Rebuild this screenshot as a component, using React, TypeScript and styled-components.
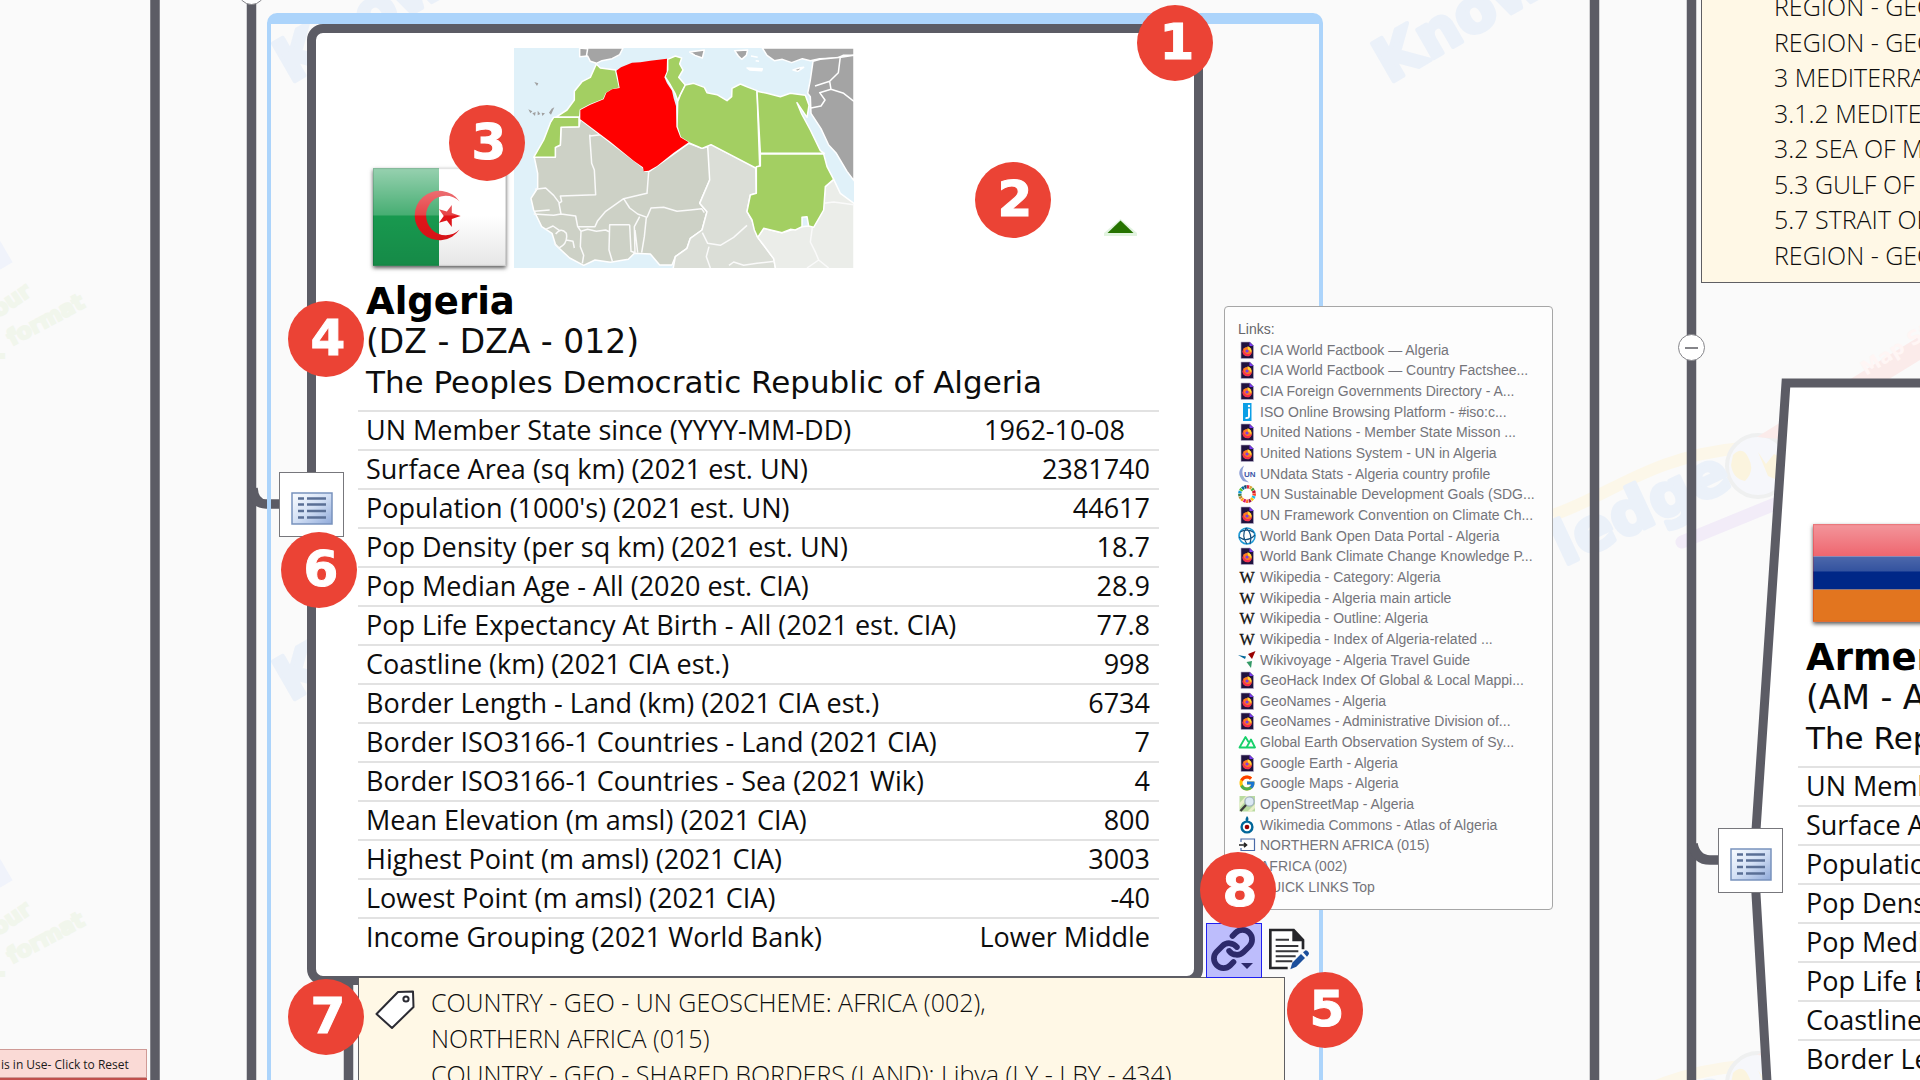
import React from 'react';
import styled, { createGlobalStyle } from 'styled-components';
import { Link as ChainIcon } from 'lucide-react';
import { FcGoogle } from 'react-icons/fc';

const color = {
  paper: '#fafafa',
  line: '#5c5c65',
  frame: '#acd4fb',
  note: '#fff8e6',
  noteEdge: '#5f5f63',
  badge: '#eb4335',
  rule: '#e2e2e2',
};

const GlobalStyle = createGlobalStyle`
  *, *::before, *::after { box-sizing: border-box; }
  body { margin: 0; background: ${color.paper}; font-family: "Open Sans", "Noto Sans", sans-serif; color: #0d0d0d; }
  ul { list-style: none; margin: 0; padding: 0; }
  h2, p { margin: 0; }
  svg { display: block; }
`;

const Canvas = styled.main`
  position: relative;
  width: 100%;
  height: 100vh;
  overflow: hidden;
  background: ${color.paper};
`;

const Backdrop = styled.svg`
  position: absolute;
  inset: 0;
`;

const Frame = styled.div`
  position: absolute;
  left: 267px;
  top: 13px;
  bottom: -20px;
  width: 1056px;
  border: 4px solid ${color.frame};
  border-top-width: 11px;
  border-radius: 10px;
`;

/* Country nodes */

const CountryCard = styled.article`
  position: absolute;
  left: 307px;
  top: 24px;
  width: 896px;
  padding: 15px 35px 20px 42px;
  border: 9px solid ${color.line};
  border-radius: 16px;
  background: #fff;
`;

const OutlineCard = styled.article`
  position: absolute;
  left: 1798px;
  top: 404px;
  width: 801px;
`;

const Media = styled.div`
  display: flex;
  align-items: flex-end;
  gap: 8px;
  height: 220px;
  padding: 0 22px 0 15px;
`;

const FlagBox = styled.div`
  margin-bottom: 2px;
  box-shadow: 0 2px 4px rgba(0, 0, 0, 0.65);
`;

const TrendBox = styled.div`
  margin: 0 0 32px auto;
`;

const Titles = styled.header`
  padding: 14px 8px 8px;
  font-family: "DejaVu Sans", Verdana, sans-serif;
  line-height: 40px;
  white-space: nowrap;
`;

const Name = styled.h2`
  font-size: 37px;
  font-weight: 700;
  color: #000;
`;

const Codes = styled.p`
  font-size: 33px;
`;

const FullName = styled.p`
  font-size: 31px;
`;

const Facts = styled.table`
  width: 100%;
  border-collapse: separate;
  border-spacing: 0;
  font-size: 27px;
  line-height: 35px;
  white-space: nowrap;
`;

const FactLabel = styled.th`
  padding: 0 8px 2px;
  border-top: 2px solid ${color.rule};
  font-weight: 400;
  text-align: left;
`;

const FactValue = styled.td<{ $inset?: boolean }>`
  padding: 0 ${(p) => (p.$inset ? 34 : 9)}px 2px 0;
  border-top: 2px solid ${color.rule};
  text-align: right;
`;

const NodeButton = styled.button<{ $x: number; $y: number }>`
  position: absolute;
  left: ${(p) => p.$x}px;
  top: ${(p) => p.$y}px;
  display: flex;
  align-items: center;
  justify-content: center;
  width: 65px;
  height: 65px;
  padding: 8px 0 0;
  border: 1px solid #77777c;
  background: #fff;
`;

const CollapseButton = styled.button<{ $y: number; $x: number }>`
  position: absolute;
  left: ${(p) => p.$x}px;
  top: ${(p) => p.$y}px;
  display: flex;
  align-items: center;
  justify-content: center;
  width: 27px;
  height: 27px;
  padding: 0;
  border: 1px solid #85858a;
  border-radius: 50%;
  background: #fff;
`;

const Minus = styled.span`
  width: 13px;
  height: 2px;
  background: #85858a;
`;

/* Tag notes */

const TagNote = styled.section`
  position: absolute;
  left: 358px;
  top: 977px;
  display: flex;
  gap: 16px;
  width: 927px;
  padding: 6px 16px;
  border: 1px solid ${color.noteEdge};
  background: ${color.note};
  font-size: 25px;
  font-weight: 350;
  line-height: 36px;
  white-space: nowrap;
`;

const TagGlyph = styled.div`
  padding-top: 6px;
`;

const SideNote = styled.section`
  position: absolute;
  left: 1701px;
  top: -21px;
  width: 926px;
  padding: 9px 72px;
  border: 1px solid ${color.noteEdge};
  background: ${color.note};
  font-size: 25px;
  font-weight: 350;
  line-height: 35px;
  white-space: nowrap;
`;

const SideList = styled.ul`
  display: flex;
  flex-direction: column;
  justify-content: space-between;
  height: 284px;
`;

/* Link menu */

const LinkMenu = styled.nav`
  position: absolute;
  left: 1224px;
  top: 306px;
  width: 329px;
  height: 604px;
  display: flex;
  flex-direction: column;
  justify-content: space-between;
  padding: 12px 12px 12px 13px;
  border: 1px solid #a6a6a6;
  border-radius: 4px;
  background: #fdfdfd;
  font: 14px/20px "Liberation Sans", Arial, sans-serif;
  color: #66666a;
  white-space: nowrap;
`;

const MenuLink = styled.a`
  display: flex;
  align-items: center;
  gap: 4px;
  color: #74747a;
  text-decoration: none;
`;

const Tools = styled.div`
  position: absolute;
  left: 1206px;
  top: 923px;
  display: flex;
  align-items: flex-start;
  gap: 6px;
`;

const LinkTool = styled.button`
  position: relative;
  display: flex;
  align-items: center;
  justify-content: center;
  width: 56px;
  height: 55px;
  padding: 0 2px 4px 0;
  border: 1px solid #1f1ff0;
  background: #bdbdfc;
  color: #2d2a6b;
`;

const Caret = styled.span`
  position: absolute;
  right: 8px;
  bottom: 8px;
  border: 6px solid transparent;
  border-top-color: currentColor;
  border-bottom: 0;
`;

const NoteTool = styled.button`
  padding: 5px 0 0;
  border: 0;
  background: none;
`;

const Badge = styled.span<{ $x: number; $y: number }>`
  position: absolute;
  left: ${(p) => p.$x - 38}px;
  top: ${(p) => p.$y - 38}px;
  width: 76px;
  height: 76px;
  padding-left: 4px;
  border-radius: 50%;
  background: ${color.badge};
  color: #fff;
  font: 700 50px/74px "DejaVu Sans", Verdana, sans-serif;
  -webkit-text-stroke: 1px #fff;
  text-align: center;
`;

const ResetBar = styled.div`
  position: absolute;
  left: 0;
  top: 1049px;
  width: 147px;
  border-bottom: 1px solid #b06060;
  background: #c0504d;
`;

const ResetButton = styled.button`
  display: block;
  width: 100%;
  height: 29px;
  margin-bottom: 2px;
  padding: 2px 0 0 1px;
  border: 1px solid #cf9a96;
  border-left: 0;
  background: #fadad6;
  color: #1a1a1a;
  font: 12px/24px "Open Sans", sans-serif;
  text-align: left;
`;

/* Drawings */

const Watermark = () => (
  <g fontFamily="DejaVu Sans" fontWeight="700">
    {[0, 618].map((dy) => (
      <g key={dy} transform={`translate(0 ${dy})`}>
        <path d="M1553 515C1610 496 1650 456 1742 448" stroke="#fcf7e9" strokeWidth="12" fill="none" />
        <path d="M1682 542L1775 504" stroke="#f2ecf8" strokeWidth="13" strokeLinecap="round" />
        <circle cx="1758" cy="466" r="31" fill="#f6f7fb" stroke="#eff0f0" strokeWidth="4" />
        <path d="M1733 455q10-10 16 4q6 12-4 22q-12-2-14-16zM1758 452l8 12l8-10l8 4v24l-14-6z" fill="#fbf4de" />
        <path d="M1757 437L1920 336V360L1790 440z" fill="#fbebea" />
        <text transform="translate(1866 376) rotate(-32)" fontSize="20" fill="#fff6f5">Map St</text>
        <g fill="#ebf1f9" stroke="#ebf1f9" strokeWidth="4" strokeLinejoin="round" fontSize="60">
          <text transform="translate(290 84) rotate(-30)">Know</text>
          <text transform="translate(1389 84) rotate(-30)">Know</text>
          <text transform="translate(1564 566) rotate(-25)">ledge</text>
          <text transform="translate(468 566) rotate(-25)">ledge</text>
        </g>
        <text transform="translate(-22 280) rotate(-30)" fontSize="58" fill="#f0f3fb" stroke="#f0f3fb" strokeWidth="4">n</text>
        <g fill="#f1f6ec" stroke="#f1f6ec" strokeWidth="2" fontSize="22">
          <text transform="translate(-14 326) rotate(-34)">your</text>
          <text transform="translate(12 346) rotate(-28)">format</text>
          <text x="-2" y="358">.</text>
        </g>
      </g>
    ))}
  </g>
);

const Scenery = () => (
  <Backdrop width="1920" height="1700" viewBox="0 0 1920 1700" aria-hidden="true">
    <Watermark />
    <g stroke={color.line} strokeWidth="9.5" fill="none">
      <path d="M155 0V1700M251.500 0V1700M1594.500 0V1700M1691.500 0V1700M348.500 980V1700" />
      <path d="M253 488Q254 504 266 504H282" />
      <path d="M1693 844Q1696 860 1710 860H1720" />
    </g>
    <path d="M1786 383H2500V1337H1782L1754 860Z" fill="#fff" stroke={color.line} strokeWidth="9" />
  </Backdrop>
);

const RegionMap = () => (
  <svg width="340" height="220" viewBox="41 54 1020 660" role="img" aria-label="Algeria in Northern Africa">
    <rect x="41" y="54" width="1020" height="660" fill="#e0f1f9" />
    <g stroke="#fff" strokeWidth="4.500" strokeLinejoin="round">
      <g fill="#a4a4a4">
        <path d="M238 54H368L358 74L335 86L305 92L288 100L270 94L262 78L238 80Z" />
        <path d="M568 66L612 60L606 84L584 76ZM703 62L742 60L738 76L724 88L714 78Z" />
        <path d="M786 54H1061V76L1028 76L1012 84L958 86L930 92L906 86L874 98L846 88L822 92L800 76Z" />
        <path d="M938 94L960 88L1022 82L1061 76V452L1040 424L1008 370L985 345L962 296L932 250L930 200L922 190L930 150Z" />
        <path d="M1020 80L1014 128L988 154L944 168M988 154L992 178L1030 190L1061 214M992 178L958 188L974 210L962 228L932 234M236 54L262 56L258 80" fill="none" />
        <path d="M878 120L896 114L910 112L892 124Z" />
      </g>
      <path d="M740 114L786 116L784 122L748 120ZM752 78L772 82M766 92L776 94" fill="#fff" />
      <path d="M182 292L236 290L240 268L428 412L434 424H447L565 340L605 355L622 350L632 380L628 450L598 520L620 545L605 600L570 625L560 655L525 680L515 705L478 705L450 672L402 670L384 688L330 697L284 690L250 706L208 684L166 645L155 610L124 590L100 540L92 505L112 474V430L102 382L165 382V352L180 345Z" fill="#cdd1c6" />
      <path d="M622 348L632 344L766 412L768 490L750 495L740 545L755 570L772 622L820 686L826 718H518L525 680L560 655L570 625L605 600L620 545L598 520L628 450Z" fill="#dbded7" />
      <path d="M772 622L790 595L845 608L905 590L925 588L970 520L975 470L1000 448L1020 490L1061 520V718H826L820 686Z" fill="#ebede9" />
      <path d="M268 318L302 314M268 314L274 400L282 420L286 494L180 498L184 514L176 520L182 552L226 558L232 590H284L292 572L316 544L370 506L414 496L440 490L445 426M370 506L388 534L412 552L440 562M440 562L452 534L490 532L530 544L570 540L604 536L612 548M438 562L432 620L424 668M388 584L392 664L404 668L402 590L418 560M388 584H328L326 660L336 694M404 600L412 668M242 604L262 598L288 604L316 600L328 606M246 700L250 676L240 650L242 604L232 590M104 478L136 474L160 496L178 520M102 544L148 540M100 552L160 556L182 552M136 598L158 588L178 602M166 612Q182 590 198 610Q204 640 176 654L162 640M198 630L218 634L222 654M606 608L622 640L660 646L700 622L740 586M626 650L618 680L630 714M686 706L700 696L730 706L770 700L824 694M936 592L930 636L946 668L955 690M970 520L1000 516L1061 524M955 690L920 714M955 690L985 714" fill="none" stroke="#fafafa" />
      <g fill="#a3cf62">
        <path d="M288 102L300 114L346 120L358 174L335 180L318 190L310 208L270 224L240 240L238 262H166L200 240L222 210L222 184L245 155L270 142Z" />
        <path d="M160 262H236V290L182 292L180 345L165 352V382H100L130 330L150 278Z" />
        <path d="M502 88L525 78L544 84L538 102L548 120L535 142L555 165L542 190L532 212L524 190L510 165L494 140L502 120Z" />
        <path d="M555 165L580 160L612 172L620 188L650 194L680 212L694 200L695 175L720 162L744 172L770 182L778 408L766 414L632 344L605 355L565 338L540 322L530 290L532 215L540 195Z" />
        <path d="M770 184L800 190L840 200L870 190L915 196L926 226L920 262L890 218L904 252L930 300L960 362L972 370H780Z" />
        <path d="M780 372H970L980 410L1000 448L975 470L970 540L940 592L925 588L920 560L905 562V590L885 600L870 598L845 608L790 595L772 622L762 600L755 570L740 545L750 495L768 490V410L780 408Z" />
      </g>
    </g>
    <path d="M348 122L362 112L395 98L420 97L450 92L500 86L499 125L492 142L500 160L515 182L520 205L527 228L528 290L540 322L565 337L520 368L470 408L445 422L430 424L428 412L400 392L330 335L240 268V240L270 224L310 208L318 188L335 178L358 174L352 140Z" fill="#f00" />
    <path d="M102 156L114 160L110 168ZM84 238L96 244L90 250ZM96 250L106 246L104 258ZM112 242L120 252L112 256ZM124 248L134 250L126 258ZM146 248L154 236L162 232L152 254Z" fill="#a0a0a0" />
  </svg>
);

const AlgeriaFlag = () => (
  <svg width="133" height="98" viewBox="0 0 132 97" role="img" aria-label="Flag of Algeria">
    <defs>
      <linearGradient id="shine" x1="0" y1="0" x2="0" y2="1">
        <stop offset="0" stopColor="#fff" stopOpacity=".55" />
        <stop offset="1" stopColor="#fff" stopOpacity=".2" />
      </linearGradient>
      <linearGradient id="shade" x1="0" y1="0" x2="0" y2="1">
        <stop offset="0" stopColor="#000" stopOpacity="0" />
        <stop offset="1" stopColor="#000" stopOpacity=".1" />
      </linearGradient>
    </defs>
    <rect width="132" height="97" fill="#fff" />
    <rect width="65.500" height="97" fill="#18994f" />
    <path d="M86 33A24.500 24.500 0 1 0 86 61A19.600 19.600 0 1 1 86 33Z" fill="#e01419" />
    <path d="M87 47.500L78.200 50.400L78.200 58.500L73.300 51.900L65.500 54.200L70.200 47.500L65.500 40.800L73.300 43.100L78.200 36.500L78.200 44.600Z" fill="#e01419" />
    <rect width="132" height="47" fill="url(#shine)" />
    <rect y="47" width="132" height="50" fill="url(#shade)" />
    <rect x=".5" y=".5" width="131" height="96" fill="none" stroke="#000" strokeOpacity=".12" />
  </svg>
);

const ArmeniaFlag = () => (
  <svg width="133" height="98" viewBox="0 0 132 97" role="img" aria-label="Flag of Armenia">
    <defs>
      <linearGradient id="gloss" x1="0" y1="0" x2="0" y2="1">
        <stop offset="0" stopColor="#fff" stopOpacity=".52" />
        <stop offset="1" stopColor="#fff" stopOpacity=".2" />
      </linearGradient>
    </defs>
    <rect width="132" height="32" fill="#e72430" />
    <rect y="32" width="132" height="33" fill="#002787" />
    <rect y="65" width="132" height="32" fill="#e2751f" />
    <rect width="132" height="47" fill="url(#gloss)" />
    <rect x=".5" y=".5" width="131" height="96" fill="none" stroke="#d01010" strokeOpacity=".25" />
  </svg>
);

const TrendUp = () => (
  <svg width="33" height="17" viewBox="0 0 33 17" role="img" aria-label="Up">
    <path d="M16.500 0L33 14V17H0V14Z" fill="#e2f4e0" />
    <path d="M16.500 1.500L29.500 14H3.500Z" fill="#267300" />
  </svg>
);

const ListIcon = () => (
  <svg width="42" height="33" viewBox="0 0 42 33" aria-hidden="true">
    <defs>
      <linearGradient id="panel" x1="0" y1="0" x2="1" y2="1">
        <stop offset="0" stopColor="#fbfdff" />
        <stop offset=".5" stopColor="#d3e0f5" />
        <stop offset="1" stopColor="#8fa9d9" />
      </linearGradient>
    </defs>
    <rect x="1" y="1" width="40" height="31" fill="url(#panel)" stroke="#7892bd" strokeWidth="1.500" />
    <path d="M7 6.500H13M7 12.500H13M7 19H13M7 25.500H13M16 6.500H35M16 12.500H35M16 19H35M16 25.500H35" stroke="#5a6f95" strokeWidth="2.600" />
  </svg>
);

const TagIcon = () => (
  <svg width="40" height="40" viewBox="0 0 40 40" aria-hidden="true">
    <path d="M23 2L38 1.500L38.500 17L17 38L1.500 24Z" fill="#fff" stroke="#2b2b33" strokeWidth="2" strokeLinejoin="round" />
    <circle cx="31" cy="9" r="2.600" fill="#fff" stroke="#2b2b33" strokeWidth="2" />
  </svg>
);

const EditNoteIcon = () => (
  <svg width="42" height="42" viewBox="217 40 126 126" aria-hidden="true">
    <path d="M276 160H224V46H294L322 76V104" fill="#fff" stroke="#26262a" strokeWidth="8" />
    <path d="M290 44V80H326Z" fill="#26262a" />
    <path d="M240 75H280M240 94H308M240 110H308M240 125H300M240 140H290" stroke="#37373b" strokeWidth="6" />
    <path d="M284 164L290 144L316 118L328 130L302 156Z" fill="#1c4f9c" />
    <path d="M322 113L330 107Q340 110 340 118L334 126Z" fill="#1c4f9c" />
  </svg>
);

type Mark = 'fox' | 'iso' | 'un' | 'sdg' | 'bank' | 'wiki' | 'voyage' | 'geo' | 'google' | 'osm' | 'commons' | 'topic';

const wheel = ['#e5243b', '#dda63a', '#4c9f38', '#c5192d', '#ff3a21', '#26bde2', '#fcc30b', '#a21942', '#fd6925', '#dd1367', '#fd9d24', '#bf8b2e', '#3f7e44', '#0a97d9', '#56c02b', '#00689d', '#19486a'];

const drawings: Record<Mark, React.ReactNode> = {
  fox: (
    <>
      <path d="M3 1H12L15.500 4.500V17.500H3Z" fill="#20123f" stroke="#b9b3cf" strokeWidth=".6" />
      <path d="M11.500 1L15.500 5H11.500Z" fill="#7a3cf0" />
      <circle cx="9.200" cy="10.500" r="4.600" fill="#ff7a1f" />
      <path d="M4.600 10.500A4.600 4.600 0 0 0 13.800 11Q11 14 8 12.500Q5.500 11 5.500 8Z" fill="#f5304f" />
      <path d="M9.500 5Q14.500 7 13.200 11.500Q12 9 10 8.500Z" fill="#ffd83a" />
      <circle cx="9" cy="10" r="1.600" fill="#7b3fe0" />
    </>
  ),
  iso: (
    <>
      <path d="M5 0H13.500V18H5Z" fill="#0c9fe6" />
      <path d="M11 5.500V13Q11 15.500 7.500 15" stroke="#fff" strokeWidth="2" fill="none" />
      <circle cx="11" cy="3" r="1.200" fill="#fff" />
    </>
  ),
  un: (
    <>
      <path d="M6 .5Q-3 7 5 16L11 17.500Q1 11 6 .5Z" fill="#8fa0d6" />
      <text x="6" y="12" fontSize="8" fontWeight="700" fontFamily="Liberation Sans" fill="#3c56a8">UN</text>
    </>
  ),
  sdg: (
    <g fill="none" strokeWidth="3.400">
      {wheel.map((c, i) => (
        <circle key={c} cx="9" cy="9" r="7.200" stroke={c} pathLength="17" strokeDasharray=".84 16.16" strokeDashoffset={-i} transform="rotate(-90 9 9)" />
      ))}
    </g>
  ),
  bank: (
    <g fill="none">
      <circle cx="9" cy="9" r="8" stroke="#1d9ad6" strokeWidth="1.600" />
      <path d="M1 10Q9 16 17 8M2 5Q9 1 16 5.500M8 1Q3 9 9 17M8 1Q15 7 12 17" stroke="#14507f" strokeWidth="1.200" />
    </g>
  ),
  wiki: <text x="9" y="14.500" fontSize="16" textAnchor="middle" fontFamily="Liberation Serif" fill="#111" stroke="#111" strokeWidth=".3">W</text>,
  voyage: (
    <>
      <path d="M0 4L8 5.500L7 8Z" fill="#006699" />
      <path d="M17.500 0L14 8L10 3Z" fill="#990000" />
      <path d="M8.500 11L14 10L13 17Z" fill="#339966" />
    </>
  ),
  geo: <path d="M9.500 14.500H1.500L7.500 4L10.500 9M8.500 14.500L13 6.500L17 14.500Z" fill="none" stroke="#16d06a" strokeWidth="1.800" strokeLinejoin="round" />,
  google: null,
  osm: (
    <>
      <path d="M1.500 1H17V16.500H1.500Z" fill="#b9dba0" />
      <path d="M1.500 8L8 1H12L1.500 13ZM9 17L17 9V13L13 17Z" fill="#e7efc9" />
      <circle cx="11.500" cy="6.500" r="4.600" fill="#dbe8f4" stroke="#a4b5c0" strokeWidth="1.400" />
      <path d="M8 10L2.500 16" stroke="#3b3b3b" strokeWidth="2.400" />
    </>
  ),
  commons: (
    <>
      <circle cx="9" cy="11" r="5.400" fill="none" stroke="#006699" strokeWidth="2.400" />
      <circle cx="9" cy="11" r="2.300" fill="#990000" />
      <path d="M9 0Q12 3 9 6Q6 4 9 0Z" fill="#006699" />
    </>
  ),
  topic: (
    <>
      <path d="M3 6V3H16.500V14.500H3V12" fill="none" stroke="#4a6aa8" strokeWidth="1.200" />
      <path d="M1 9H8M6 6.800L8.500 9L6 11.200" fill="none" stroke="#222" strokeWidth="1.600" />
    </>
  ),
};

const Icon = ({ mark }: { mark: Mark }) =>
  mark === 'google' ? (
    <FcGoogle size={18} aria-hidden="true" />
  ) : (
    <svg width="18" height="18" viewBox="0 0 18 18" aria-hidden="true">{drawings[mark]}</svg>
  );

/* Data */

const links: [Mark, string][] = [
  ['fox', 'CIA World Factbook — Algeria'],
  ['fox', 'CIA World Factbook — Country Factshee...'],
  ['fox', 'CIA Foreign Governments Directory - A...'],
  ['iso', 'ISO Online Browsing Platform - #iso:c...'],
  ['fox', 'United Nations - Member State Misson ...'],
  ['fox', 'United Nations System - UN in Algeria'],
  ['un', 'UNdata Stats - Algeria country profile'],
  ['sdg', 'UN Sustainable Development Goals (SDG...'],
  ['fox', 'UN Framework Convention on Climate Ch...'],
  ['bank', 'World Bank Open Data Portal - Algeria'],
  ['fox', 'World Bank Climate Change Knowledge P...'],
  ['wiki', 'Wikipedia - Category: Algeria'],
  ['wiki', 'Wikipedia - Algeria main article'],
  ['wiki', 'Wikipedia - Outline: Algeria'],
  ['wiki', 'Wikipedia - Index of Algeria-related ...'],
  ['voyage', 'Wikivoyage - Algeria Travel Guide'],
  ['fox', 'GeoHack Index Of Global & Local Mappi...'],
  ['fox', 'GeoNames - Algeria'],
  ['fox', 'GeoNames - Administrative Division of...'],
  ['geo', 'Global Earth Observation System of Sy...'],
  ['fox', 'Google Earth - Algeria'],
  ['google', 'Google Maps - Algeria'],
  ['osm', 'OpenStreetMap - Algeria'],
  ['commons', 'Wikimedia Commons - Atlas of Algeria'],
  ['topic', 'NORTHERN AFRICA (015)'],
  ['topic', 'AFRICA (002)'],
  ['topic', 'QUICK LINKS Top'],
];

const facts: [string, string][] = [
  ['UN Member State since (YYYY-MM-DD)', '1962-10-08'],
  ['Surface Area (sq km) (2021 est. UN)', '2381740'],
  ["Population (1000's) (2021 est. UN)", '44617'],
  ['Pop Density (per sq km) (2021 est. UN)', '18.7'],
  ['Pop Median Age - All (2020 est. CIA)', '28.9'],
  ['Pop Life Expectancy At Birth - All (2021 est. CIA)', '77.8'],
  ['Coastline (km) (2021 CIA est.)', '998'],
  ['Border Length - Land (km) (2021 CIA est.)', '6734'],
  ['Border ISO3166-1 Countries - Land (2021 CIA)', '7'],
  ['Border ISO3166-1 Countries - Sea (2021 Wik)', '4'],
  ['Mean Elevation (m amsl) (2021 CIA)', '800'],
  ['Highest Point (m amsl) (2021 CIA)', '3003'],
  ['Lowest Point (m amsl) (2021 CIA)', '-40'],
  ['Income Grouping (2021 World Bank)', 'Lower Middle'],
];

const regions = [
  'REGION - GEO',
  'REGION - GEO',
  '3 MEDITERRANEAN',
  '3.1.2 MEDITERRANEAN',
  '3.2 SEA OF MARMARA',
  '5.3 GULF OF ADEN',
  '5.7 STRAIT OF',
  'REGION - GEO',
];

const badges = [
  [1, 1175, 43], [2, 1013, 200], [3, 487, 143], [4, 326, 339],
  [5, 1325, 1010], [6, 319, 570], [7, 326, 1017], [8, 1238, 890],
];

export default function App() {
  return (
    <Canvas>
      <GlobalStyle />
      <Scenery />
      <Frame />

      <CountryCard>
        <Media>
          <FlagBox><AlgeriaFlag /></FlagBox>
          <RegionMap />
          <TrendBox><TrendUp /></TrendBox>
        </Media>
        <Titles>
          <Name>Algeria</Name>
          <Codes>(DZ - DZA - 012)</Codes>
          <FullName>The Peoples Democratic Republic of Algeria</FullName>
        </Titles>
        <Facts>
          <tbody>
            {facts.map(([label, value], i) => (
              <tr key={label}>
                <FactLabel scope="row">{label}</FactLabel>
                <FactValue $inset={i === 0}>{value}</FactValue>
              </tr>
            ))}
          </tbody>
        </Facts>
      </CountryCard>

      <OutlineCard>
        <Media>
          <FlagBox><ArmeniaFlag /></FlagBox>
        </Media>
        <Titles>
          <Name>Armenia</Name>
          <Codes>(AM - ARM - 051)</Codes>
          <FullName>The Republic of Armenia</FullName>
        </Titles>
        <Facts>
          <tbody>
            {facts.slice(0, 8).map(([label]) => (
              <tr key={label}>
                <FactLabel scope="row">{label}</FactLabel>
              </tr>
            ))}
          </tbody>
        </Facts>
      </OutlineCard>

      <SideNote>
        <SideList>
          {regions.map((r, i) => <li key={i}>{r}</li>)}
        </SideList>
      </SideNote>

      <TagNote>
        <TagGlyph><TagIcon /></TagGlyph>
        <ul>
          <li>COUNTRY - GEO - UN GEOSCHEME: AFRICA (002),</li>
          <li>NORTHERN AFRICA (015)</li>
          <li>COUNTRY - GEO - SHARED BORDERS (LAND): Libya (LY - LBY - 434)</li>
        </ul>
      </TagNote>

      <NodeButton $x={279} $y={472} aria-label="Algeria properties"><ListIcon /></NodeButton>
      <NodeButton $x={1718} $y={828} aria-label="Armenia properties"><ListIcon /></NodeButton>
      <CollapseButton $x={238} $y={-22} aria-label="Collapse branch"><Minus /></CollapseButton>
      <CollapseButton $x={1678} $y={334} aria-label="Collapse branch"><Minus /></CollapseButton>

      <LinkMenu aria-label="Links">
        <span>Links:</span>
        {links.map(([mark, text]) => (
          <MenuLink href="#" key={text}><Icon mark={mark} />{text}</MenuLink>
        ))}
      </LinkMenu>

      <Tools>
        <LinkTool aria-label="Links"><ChainIcon size={46} strokeWidth={3} /><Caret /></LinkTool>
        <NoteTool aria-label="Edit notes"><EditNoteIcon /></NoteTool>
      </Tools>

      <ResetBar><ResetButton>is in Use- Click to Reset</ResetButton></ResetBar>

      {badges.map(([n, x, y]) => <Badge key={n} $x={x} $y={y}>{n}</Badge>)}
    </Canvas>
  );
}
